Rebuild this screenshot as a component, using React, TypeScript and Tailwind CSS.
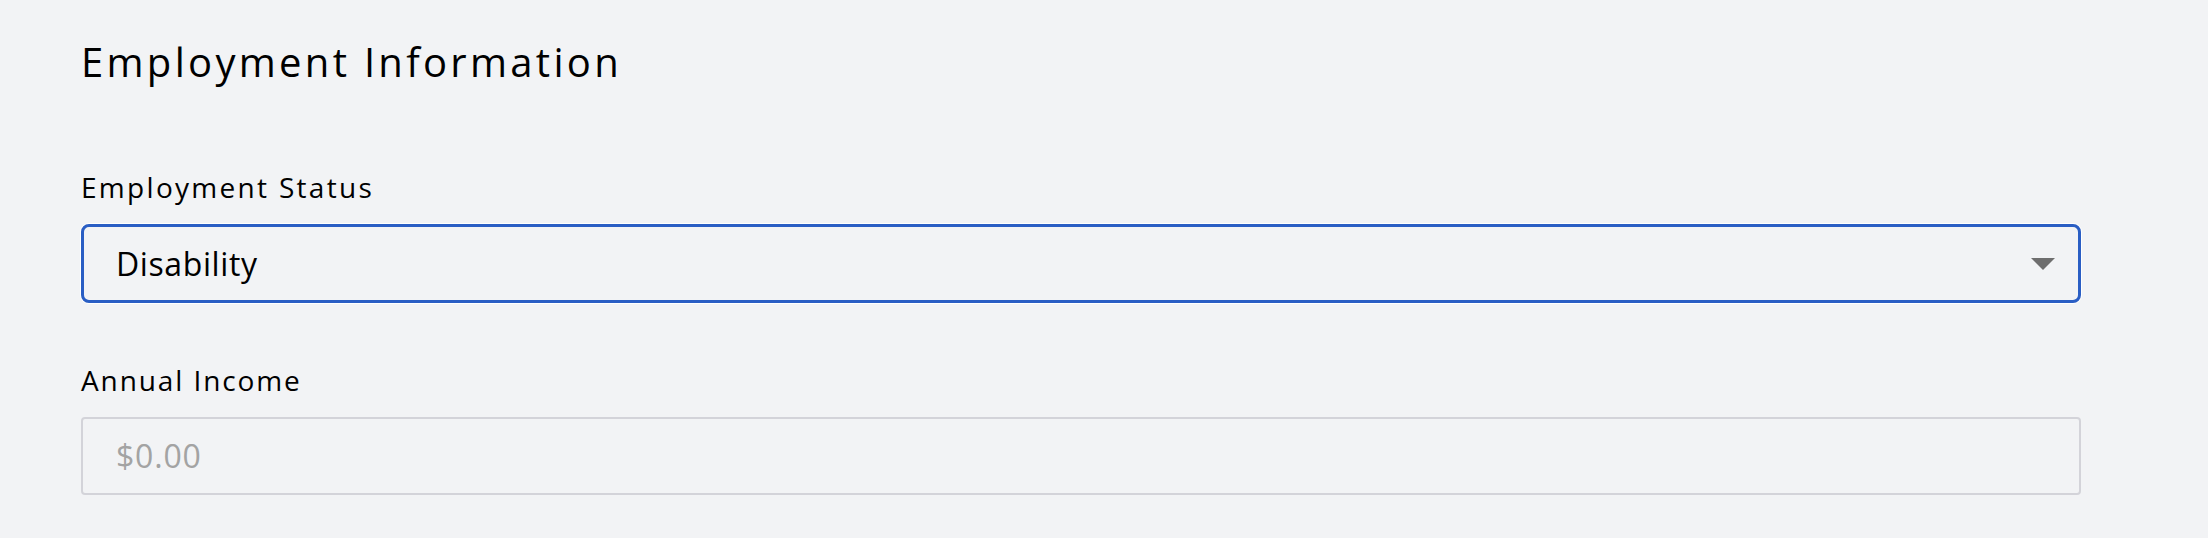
import React from "react";

export default function App() {
  return (
    <div
      className="w-[2208px] h-[538px] bg-[#f2f3f5] text-black overflow-hidden"
      style={{ fontFamily: '"Open Sans", sans-serif' }}
    >
      <div className="pl-[81px] pr-[127px] pt-[42px] flex flex-col">
        <h2 className="text-[40px] leading-[40px] font-normal tracking-[3.3px]">Employment Information</h2>

        <label className="mt-[91px] text-[28px] leading-[28px] tracking-[2.3px]">Employment Status</label>
        <div className="mt-[23px] h-[79px] rounded-[8px] border-[3px] border-[#2a5ec4] ring-1 ring-white flex items-center justify-between pl-[32px] pr-[23px]">
          <span className="text-[32px] leading-[32px] tracking-[0.6px]">Disability</span>
          <svg width="24" height="12" viewBox="0 0 24 12">
            <path d="M0 0 H24 L12 12 Z" fill="#6e6e6e" />
          </svg>
        </div>

        <label className="mt-[63px] text-[28px] leading-[28px] tracking-[1.9px]">Annual Income</label>
        <div className="mt-[23px] h-[78px] rounded-[4px] border-2 border-[#d3d3d9] flex items-center pl-[33px]">
          <span className="text-[32px] leading-[32px] text-[#a3a3a3] tracking-[0.8px]">$0.00</span>
        </div>
      </div>
    </div>
  );
}
